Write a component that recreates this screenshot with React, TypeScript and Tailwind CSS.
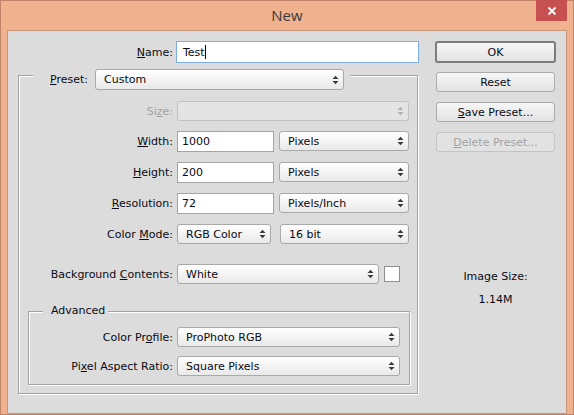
import React from "react";

function Arrows({ disabled }: { disabled?: boolean }) {
  const c = disabled ? "#b0b0b0" : "#3a3a3a";
  return (
    <svg width="7" height="10" viewBox="0 0 7 10" className="ml-auto mr-[4px] shrink-0">
      <path d="M0.5 4 L3.5 0.8 L6.5 4 Z" fill={c} />
      <path d="M0.5 6 L3.5 9.2 L6.5 6 Z" fill={c} />
    </svg>
  );
}

function Select({ w, value, disabled, ml }: { w: string; value?: string; disabled?: boolean; ml?: string }) {
  return (
    <div
      className={
        "h-[20px] flex items-center rounded-[3px] border pl-[8px] " +
        w +
        " " +
        (ml ?? "") +
        (disabled
          ? " border-[#c2c2c2] bg-[#e4e4e4]"
          : " border-[#a9a9a9] bg-linear-to-b from-[#ffffff] to-[#e9e9e9]")
      }
    >
      <span className="whitespace-nowrap">{value}</span>
      <Arrows disabled={disabled} />
    </div>
  );
}

function Field({ w, value }: { w: string; value: string }) {
  return (
    <div className={"h-[21px] flex items-center border border-[#a4a4a4] bg-white pl-[4px] " + w}>
      {value}
    </div>
  );
}

function Label({ w, children, disabled }: { w: string; children: React.ReactNode; disabled?: boolean }) {
  return (
    <div className={"text-right whitespace-nowrap mr-[4px] " + w + (disabled ? " text-[#a2a2a2]" : "")}>
      {children}
    </div>
  );
}

function Button({ children, disabled }: { children: React.ReactNode; disabled?: boolean }) {
  return (
    <div
      className={
        "w-[119px] h-[20px] flex items-center justify-center rounded-[3px] border " +
        (disabled
          ? "border-[#c4c4c4] bg-[#e2e2e2] text-[#a3a3a3]"
          : "border-[#aaaaaa] bg-linear-to-b from-[#f6f6f6] to-[#e3e3e3]")
      }
    >
      {children}
    </div>
  );
}

export default function App() {
  return (
    <div className="w-[574px] h-[415px] border border-[#c08468] bg-[#f0b18f] flex flex-col font-['DejaVu_Sans',sans-serif] text-[11px] leading-[13px] text-[#0a0a14]">
      {/* title bar */}
      <div className="h-[29px] flex px-[6px] shrink-0">
        <div className="w-[31px]" />
        <div className="flex-1 text-center font-['Open_Sans',sans-serif] text-[15px] leading-[29px] text-[#3a3a3a]">
          New
        </div>
        <div className="w-[31px] h-[21px] -mt-px bg-[#c75050] flex items-center justify-center">
          <svg width="10" height="10" viewBox="0 0 10 10">
            <path d="M1.5 1.5 L8.5 8.5 M8.5 1.5 L1.5 8.5" stroke="#fff" strokeWidth="1.8" />
          </svg>
        </div>
      </div>

      {/* client area */}
      <div className="mx-[6px] flex-1 border border-[#c9967b] bg-[#dcdcdc] flex pl-[10px] pt-[10px]">
        <div className="w-[401px] flex flex-col">
          <div className="h-[22px] flex items-center">
            <div className="w-[155px] text-right mr-[3px]">
              <u>N</u>ame:
            </div>
            <div className="w-[243px] h-[22px] flex items-center border border-[#7eaee0] bg-white pl-[6px]">
              Test
              <span className="w-px h-[14px] bg-black" />
            </div>
          </div>

          {/* preset group */}
          <div className="mt-[12px] w-[400px] border border-[#a3a3a3] shadow-[1px_1px_0_#ffffff,inset_1px_1px_0_#ffffff] flex flex-col pb-[8px]">
            <div className="-mt-[7px] ml-[14px] self-start h-[21px] flex items-center bg-[#dcdcdc] pl-[17px] pr-[6px]">
              <div className="w-[45px]">
                <u>P</u>reset:
              </div>
              <div className="h-[21px] w-[249px] flex items-center rounded-[3px] border border-[#a9a9a9] bg-linear-to-b from-[#ffffff] to-[#e9e9e9] pl-[8px]">
                Custom
                <Arrows />
              </div>
            </div>

            <div className="mt-[11px] h-[20px] flex items-center">
              <Label w="w-[154px]" disabled>
                Si<u>z</u>e:
              </Label>
              <Select w="w-[232px]" disabled />
            </div>

            <div className="mt-[10px] h-[21px] flex items-start">
              <Label w="w-[154px] leading-[21px]">
                <u>W</u>idth:
              </Label>
              <Field w="w-[97px]" value="1000" />
              <Select w="w-[130px]" ml="ml-[5px]" value="Pixels" />
            </div>

            <div className="mt-[10px] h-[21px] flex items-start">
              <Label w="w-[154px] leading-[21px]">
                <u>H</u>eight:
              </Label>
              <Field w="w-[97px]" value="200" />
              <Select w="w-[130px]" ml="ml-[5px]" value="Pixels" />
            </div>

            <div className="mt-[10px] h-[21px] flex items-start">
              <Label w="w-[154px] leading-[21px]">
                <u>R</u>esolution:
              </Label>
              <Field w="w-[97px]" value="72" />
              <Select w="w-[130px]" ml="ml-[5px]" value="Pixels/Inch" />
            </div>

            <div className="mt-[10px] h-[20px] flex items-center">
              <Label w="w-[154px]">
                Color <u>M</u>ode:
              </Label>
              <Select w="w-[94px]" value="RGB Color" />
              <Select w="w-[129px]" ml="ml-[9px]" value="16 bit" />
            </div>

            <div className="mt-[20px] h-[20px] flex items-center">
              <Label w="w-[154px]">
                Background <u>C</u>ontents:
              </Label>
              <Select w="w-[202px]" value="White" />
              <div className="ml-[5px] w-[16px] h-[16px] border border-[#8f8f8f] bg-white" />
            </div>

            {/* advanced group */}
            <div className="mt-[27px] ml-[9px] w-[382px] border border-[#a3a3a3] shadow-[1px_1px_0_#ffffff,inset_1px_1px_0_#ffffff] flex flex-col pb-[8px]">
              <div className="-mt-[8px] ml-[14px] self-start h-[14px] leading-[14px] bg-[#dcdcdc] pl-[8px] pr-[3px]">
                Advanced
              </div>
              <div className="mt-[9px] h-[20px] flex items-center">
                <Label w="w-[144px]">
                  Color Pr<u>o</u>file:
                </Label>
                <Select w="w-[223px]" value="ProPhoto RGB" />
              </div>
              <div className="mt-[9px] h-[20px] flex items-center">
                <Label w="w-[144px]">
                  Pi<u>x</u>el Aspect Ratio:
                </Label>
                <Select w="w-[223px]" value="Square Pixels" />
              </div>
            </div>
          </div>
        </div>

        {/* right column */}
        <div className="ml-[16px] w-[121px] flex flex-col items-center">
          <div className="w-[121px] h-[22px] flex items-center justify-center rounded-[3px] border-2 border-[#7c7c7c] bg-linear-to-b from-[#f6f6f6] to-[#e3e3e3]">
            OK
          </div>
          <div className="mt-[9px]">
            <Button>Reset</Button>
          </div>
          <div className="mt-[10px]">
            <Button>
              <u>S</u>ave Preset...
            </Button>
          </div>
          <div className="mt-[10px]">
            <Button disabled>
              <u>D</u>elete Preset...
            </Button>
          </div>
          <div className="mt-[118px] leading-[14px]">Image Size:</div>
          <div className="mt-[9px] leading-[14px]">1.14M</div>
        </div>
      </div>
    </div>
  );
}
